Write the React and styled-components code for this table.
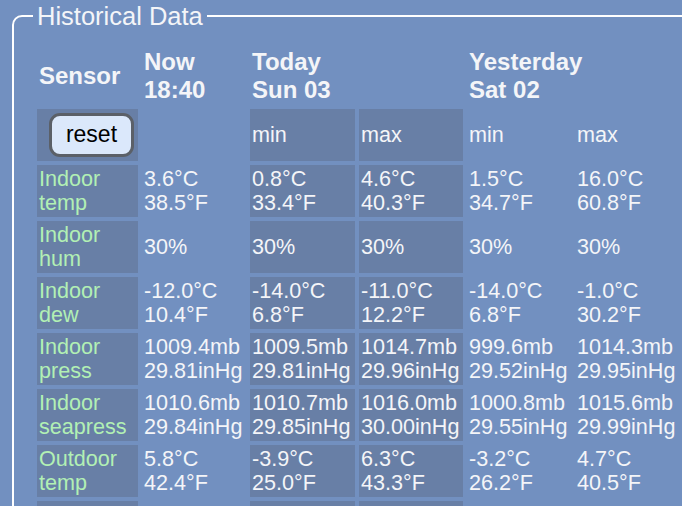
import React from "react";
import styled, { createGlobalStyle } from "styled-components";

const Global = createGlobalStyle`
  html, body {
    margin: 0;
    padding: 0;
    overflow: hidden;
    background: #7290c0;
    font-family: "Liberation Sans", Arial, sans-serif;
  }
`;

const Page = styled.div`
  padding: 2px 0 0 12px;
`;

const Frame = styled.fieldset`
  margin: 0;
  padding: 12px 19px 10px 19px;
  border: 2px solid #ffffff;
  border-radius: 10px;
  min-width: 0;
  width: 700px;
`;

const Title = styled.legend`
  padding: 0 4px;
  font-size: 25.5px;
  line-height: 28px;
  color: #f4f5f8;
`;

const Table = styled.table`
  border-spacing: 4px;
  border-collapse: separate;
  table-layout: fixed;
  width: 650px;
  margin: 0;
`;

const Head = styled.th`
  text-align: left;
  vertical-align: middle;
  font-size: 24px;
  line-height: 27.5px;
  font-weight: bold;
  color: #f4f5f8;
  padding: 2px;
  white-space: nowrap;
`;

const Cell = styled.td`
  padding: 2px;
  font-size: 21.6px;
  line-height: 24px;
  height: 48px;
  vertical-align: middle;
  white-space: nowrap;
  color: ${(p) => (p.$label ? "#b2f0b4" : "#f4f5f8")};
  background: ${(p) => (p.$shade ? "#687fa6" : "transparent")};
`;

const ResetButton = styled.button`
  display: block;
  margin-left: 10px;
  width: 85px;
  height: 44px;
  box-sizing: border-box;
  border: 3.5px solid #5b6068;
  border-radius: 11px;
  background: #dbe8fb;
  color: #000;
  font-family: "Liberation Sans", Arial, sans-serif;
  font-size: 23px;
  padding: 0 0 1px;
  cursor: pointer;
`;

const widths = [101, 104, 105, 104, 104, 104];
const shaded = [true, false, true, true, false, false];

const rows = [
  ["Indoor", "temp", ["3.6°C", "38.5°F"], ["0.8°C", "33.4°F"], ["4.6°C", "40.3°F"], ["1.5°C", "34.7°F"], ["16.0°C", "60.8°F"]],
  ["Indoor", "hum", ["30%"], ["30%"], ["30%"], ["30%"], ["30%"]],
  ["Indoor", "dew", ["-12.0°C", "10.4°F"], ["-14.0°C", "6.8°F"], ["-11.0°C", "12.2°F"], ["-14.0°C", "6.8°F"], ["-1.0°C", "30.2°F"]],
  ["Indoor", "press", ["1009.4mb", "29.81inHg"], ["1009.5mb", "29.81inHg"], ["1014.7mb", "29.96inHg"], ["999.6mb", "29.52inHg"], ["1014.3mb", "29.95inHg"]],
  ["Indoor", "seapress", ["1010.6mb", "29.84inHg"], ["1010.7mb", "29.85inHg"], ["1016.0mb", "30.00inHg"], ["1000.8mb", "29.55inHg"], ["1015.6mb", "29.99inHg"]],
  ["Outdoor", "temp", ["5.8°C", "42.4°F"], ["-3.9°C", "25.0°F"], ["6.3°C", "43.3°F"], ["-3.2°C", "26.2°F"], ["4.7°C", "40.5°F"]],
  ["Outdoor", "hum", ["86%"], ["72%"], ["95%"], ["70%"], ["96%"]],
];

function Lines({ items }) {
  return items.map((t, i) => (
    <React.Fragment key={i}>
      {i > 0 && <br />}
      {t}
    </React.Fragment>
  ));
}

export default function App() {
  return (
    <>
      <Global />
      <Page>
        <Frame>
          <Title>Historical Data</Title>
          <Table>
            <colgroup>
              {widths.map((w, i) => (
                <col key={i} style={{ width: w }} />
              ))}
            </colgroup>
            <thead>
              <tr>
                <Head>Sensor</Head>
                <Head>
                  Now
                  <br />
                  18:40
                </Head>
                <Head colSpan={2}>
                  Today
                  <br />
                  Sun 03
                </Head>
                <Head colSpan={2}>
                  Yesterday
                  <br />
                  Sat 02
                </Head>
              </tr>
            </thead>
            <tbody>
              <tr>
                <Cell $shade>
                  <ResetButton type="button">reset</ResetButton>
                </Cell>
                <Cell />
                <Cell $shade>min</Cell>
                <Cell $shade>max</Cell>
                <Cell>min</Cell>
                <Cell>max</Cell>
              </tr>
              {rows.map((r, ri) => (
                <tr key={ri}>
                  <Cell $shade $label>
                    {r[0]}
                    <br />
                    {r[1]}
                  </Cell>
                  {r.slice(2).map((v, ci) => (
                    <Cell key={ci} $shade={shaded[ci + 1]}>
                      <Lines items={v} />
                    </Cell>
                  ))}
                </tr>
              ))}
            </tbody>
          </Table>
        </Frame>
      </Page>
    </>
  );
}
